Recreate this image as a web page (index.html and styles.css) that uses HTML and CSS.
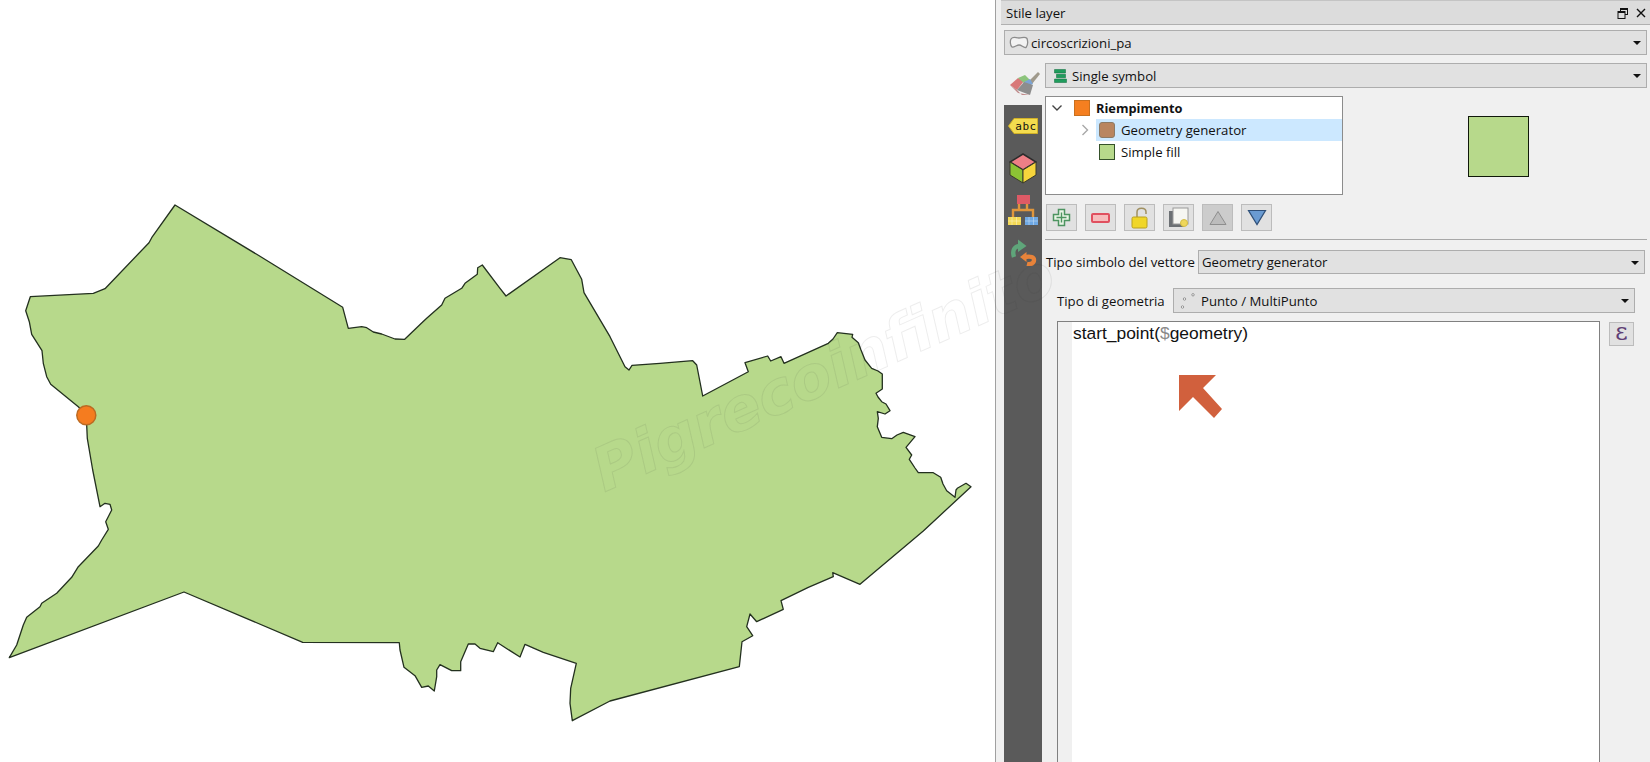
FILE: index.html
```html
<!DOCTYPE html>
<html lang="en">

<head>
  <meta charset="UTF-8">
  <meta name="viewport" content="width=device-width, initial-scale=1.0">
  <title>Stile layer</title>
  <link rel="stylesheet" href="styles.css">
</head>

<body>
  <div class="page">
    <div class="map">
      <svg width="995" height="762" viewBox="0 0 995 762">
        <polygon class="area" points="86.3,415 78.3,406.7 50.7,384.3 46.7,376.7 43.3,363.3 42,350.7 31.7,334.3 29.3,321.7 25.7,310.7 30.3,296.7 93.3,293.3 105,288.7 149,242.7 151.7,237.7 175,205 256.7,254.3 342.7,307.3 348.3,328.3 361.7,326.7 366.7,327.7 373.3,332 381.7,334 395,339 404.7,339.3 422.7,322 426.7,318.3 441.7,305 445,298.3 461.7,288.3 465,283.3 477.3,274.3 477.7,267.7 482.3,265 500,288.3 506,296 560,257.7 571.3,259.7 581.7,279.3 584,292.7 610,336.7 625,366.7 629,370 632,365.3 660,363.3 692.7,360.7 696.7,365 702.7,396 748.3,371.7 745,362.7 767.7,356 770.7,361 781,356.7 784,363.3 828.3,343.3 833,339 837.3,332.7 852.7,334.3 852,337.3 858.3,342.7 861,350 865,360 871.7,368.3 878,371 882.3,374 882.3,389 876,393.3 878,397 881.7,401.7 886,404 890,410.7 885,414 877.3,411.7 878.3,418.3 877.3,426.7 881.7,437.3 891.7,438.7 897,435 903.3,432.3 915,436.7 906,447.3 911.7,455 909.3,459.3 915,468 918.3,472.7 933.3,472.7 940.7,477.3 943,484 946.7,490.7 955,497.3 956,490 957.3,488.3 966,483.3 971,486.7 923.3,531 860,584.3 832.7,572.7 833.3,576.7 808.3,587.3 781,600.7 783.3,609.3 756.7,621.7 750,614 746.7,626.7 752.7,635.7 742,641.7 739.3,666.7 610,701 572.3,720.7 570,703.3 570.7,688.3 576.3,663.3 543.3,652.3 525,644.3 520,657 500,644.3 497.7,642.7 493.3,651.7 480,648.3 475,644 468.3,644 460.7,661.7 460.7,670.7 451.7,670.7 440,664.7 436.7,670 436.7,676.7 434.3,691 428.3,686 421.7,687.3 415,675.7 404,667.3 400,650 399.3,642.7 302.7,642.3 184,592 9.3,657.7 16.7,645 23.3,625 26.7,617.3 40,606.7 41.7,603.3 56.7,593.3 71.7,577.3 78.3,566.7 98.3,546 101.7,540 108.3,529.3 105.7,521.7 111.7,510 110,504.3 105,503.3 100,506.7 92.7,470 87.3,438.3 86.7,425.3" />
        <circle class="start-point" cx="86.3" cy="415.3" r="9.5" />
      </svg>
    </div>

    <div class="panel">
      <div class="title-bar">
        <span>Stile layer</span>
        <div class="title-buttons">
          <svg width="12" height="12" viewBox="0 0 12 12">
            <rect x="3.5" y="1.5" width="7" height="6" fill="none" stroke="#111" />
            <rect x="1" y="4.5" width="7" height="7" fill="#dcdcdc" stroke="#111" />
            <path d="M1 5.5h7M3.5 2.5h7" stroke="#111" />
          </svg>
          <svg width="10" height="10" viewBox="0 0 10 10">
            <path d="M1 1l8 8M9 1l-8 8" stroke="#111" stroke-width="1.4" />
          </svg>
        </div>
      </div>

      <div class="combo layer-combo">
        <svg width="20" height="16" viewBox="0 0 20 16">
          <path d="M2 4c2-3 5-1 8-1s6-2 8 .5c1 3 .5 7-1 9-3 .5-4-2.500-7-2.500s-5 3-7 2c-2-2-2-6-1-8z" fill="#f2f2f2" stroke="#8c8c8c" stroke-width="1.3" />
        </svg>
        <span>circoscrizioni_pa</span>
      </div>

      <div class="main">
        <div class="side">
          <div class="brush">
            <svg width="32" height="28" viewBox="0 0 32 28">
              <path d="M20 12l9-9 2 2-8 10z" fill="#a09a8c" />
              <path d="M1 16l8-7 6 3-7 9z" fill="#d87878" />
              <path d="M9 9l7-3 5 5-6 3z" fill="#8cc47c" />
              <path d="M15 13l6-3 3 5-7 3z" fill="#7ca4d4" />
              <path d="M8 21l7-8 9 3-3 10z" fill="#8d8d8d" />
              <path d="M1 16l7 5 5 5 8 0-12-2z" fill="#c08a8a" />
            </svg>
          </div>
          <div class="tab-list">
            <div class="tab-icon">
              <svg width="30" height="30" viewBox="0 0 30 30">
                <polygon points="0.5,15 6,7.5 29.5,7.5 29.5,22.5 6,22.5" fill="#f4dc4e" stroke="#d0b028" />
                <text class="tag-text" x="18" y="19">abc</text>
              </svg>
            </div>
            <div class="tab-icon">
              <svg width="28" height="31" viewBox="0 0 28 31">
                <polygon points="14,1 27,9 14,17 1,9" fill="#ee7f86" stroke="#2c2c2c" stroke-width="1.5" />
                <polygon points="1,9 14,17 14,30 1,22" fill="#8cc334" stroke="#3a3a2a" stroke-width="1" />
                <polygon points="27,9 14,17 14,30 27,22" fill="#f6d53c" stroke="#3a3a2a" stroke-width="1" />
              </svg>
            </div>
            <div class="tab-icon">
              <svg width="30" height="30" viewBox="0 0 30 30">
                <path d="M11 8v7M19 8v7M5 23v-8h20v8" fill="none" stroke="#e0963c" stroke-width="2.4" />
                <rect x="9" y="0" width="13" height="9" fill="#dd5a66" />
                <rect x="0" y="22" width="13" height="8" fill="#f4d955" />
                <rect x="17" y="22" width="13" height="8" fill="#6ea8e4" />
                <path d="M4 22v8M8.500 22v8M21 22v8M25.500 22v8M0 26h13M17 26h13" stroke="#fff" stroke-width=".6" opacity=".6" />
              </svg>
            </div>
            <div class="tab-icon">
              <svg width="28" height="28" viewBox="0 0 28 28">
                <path d="M5 19c-2-6 0-11 6-11" fill="none" stroke="#5fa57a" stroke-width="4.4" />
                <polygon points="9,1.500 17.500,8 9,14" fill="#5fa57a" />
                <path d="M16 19c6-1 9 0 9 3s-3 5-7 4" fill="none" stroke="#e8833a" stroke-width="4.4" />
                <polygon points="17.500,14 11,19 17.500,24" fill="#e8833a" />
              </svg>
            </div>
          </div>
        </div>

        <div class="content">
          <div class="combo">
            <svg width="13" height="14" viewBox="0 0 13 14">
              <path d="M.5 .5h11v3.500H.5zM2.500 5.300h9v3.400h-9zM.5 10h12v3.500H.5z" fill="#1f9c5c" stroke="#0d6a3a" stroke-width=".5" />
            </svg>
            <span>Single symbol</span>
          </div>

          <div class="symbol-row">
            <div class="tree">
              <div class="tree-row">
                <div class="twisty root">
                  <svg width="10" height="10" viewBox="0 0 10 10">
                    <path d="M.5 2.500l4.500 4.500 4.500-4.500" fill="none" stroke="#444" stroke-width="1.400" />
                  </svg>
                </div>
                <div class="tree-item">
                  <span class="swatch swatch-orange"></span>
                  <b>Riempimento</b>
                </div>
              </div>
              <div class="tree-row">
                <div class="twisty child">
                  <svg width="8" height="12" viewBox="0 0 8 12">
                    <path d="M1.500 1l5 5-5 5" fill="none" stroke="#a8a8a8" stroke-width="1.400" />
                  </svg>
                </div>
                <div class="tree-item selected">
                  <span class="swatch swatch-brown"></span>
                  <span>Geometry generator</span>
                </div>
              </div>
              <div class="tree-row">
                <div class="twisty child"></div>
                <div class="tree-item">
                  <span class="swatch swatch-green"></span>
                  <span>Simple fill</span>
                </div>
              </div>
            </div>
            <div class="preview">
              <div class="preview-box"></div>
            </div>
          </div>

          <div class="tool-row">
            <div class="tool-btn">
              <svg width="19" height="19" viewBox="0 0 19 19">
                <path d="M6.500 1.500h6v5h5v6h-5v5h-6v-5h-5v-6h5z" fill="#eaf5e6" stroke="#4d9460" stroke-width="1.500" />
                <path d="M9.500 4.500v10M4.500 9.500h10" stroke="#4d9460" stroke-width="1.400" />
              </svg>
            </div>
            <div class="tool-btn">
              <svg width="19" height="10" viewBox="0 0 19 10">
                <rect x="1" y="1" width="17" height="8" rx="1" fill="#f6bcbc" stroke="#e0505f" stroke-width="2" />
              </svg>
            </div>
            <div class="tool-btn">
              <svg width="18" height="24" viewBox="0 0 18 24">
                <path d="M6 11V6c0-5 9-5 9 0v2" fill="none" stroke="#a09060" stroke-width="1.500" />
                <rect x="1" y="11" width="15" height="11" rx="1.500" fill="#f0d628" stroke="#b8a020" />
              </svg>
            </div>
            <div class="tool-btn">
              <svg width="22" height="22" viewBox="0 0 22 22">
                <rect x="1" y="4" width="15" height="16" fill="#6c7074" />
                <rect x="5" y="1" width="15" height="16" fill="#f6f6f2" stroke="#9a9a9a" />
                <circle cx="16" cy="16" r="3.500" fill="#efd75c" stroke="#d4bd44" />
              </svg>
            </div>
            <div class="tool-btn disabled">
              <svg width="18" height="16" viewBox="0 0 18 16">
                <polygon points="9,1.500 17,14.500 1,14.500" fill="#bcbcbc" stroke="#8e8e8e" />
              </svg>
            </div>
            <div class="tool-btn">
              <svg width="20" height="17" viewBox="0 0 20 17">
                <polygon points="1.500,1.500 18.500,1.500 10,15.500" fill="#6a9bd2" stroke="#2e4f78" stroke-width="1.200" />
              </svg>
            </div>
          </div>

          <div class="divider"></div>

          <div class="form-row symbol-type">
            <span class="form-label">Tipo simbolo del vettore</span>
            <div class="combo">
              <span>Geometry generator</span>
            </div>
          </div>

          <div class="form-row geometry-type">
            <span class="form-label">Tipo di geometria</span>
            <div class="combo">
              <svg width="19" height="16" viewBox="0 0 19 16">
                <circle cx="2.500" cy="14" r="1.200" fill="#fff" stroke="#909090" />
                <circle cx="4.500" cy="6" r="1.200" fill="#fff" stroke="#909090" />
                <circle cx="13" cy="1.800" r="1.200" fill="#fff" stroke="#909090" />
              </svg>
              <span>Punto / MultiPunto</span>
            </div>
          </div>

          <div class="editor-row">
            <div class="editor">
              <div class="gutter"></div>
              <div class="code">start_point(<span class="dollar">$</span>geometry)</div>
              <svg class="note-arrow" width="46" height="46" viewBox="0 0 46 46">
                <polygon points="1,1 38,1 25,14 44,35 36,44 15,23 1,37" fill="#d1603d" />
              </svg>
            </div>
            <div class="expr-btn">&#949;</div>
          </div>
        </div>
      </div>
    </div>

    <div class="watermark">Pigrecoinfinito</div>
  </div>
</body>

</html>
```

FILE: styles.css
```css
* {
  box-sizing: border-box;
}

html,
body {
  margin: 0;
  padding: 0;
  height: 100%;
  overflow: hidden;
  background: #fff;
}

.page {
  position: relative;
  display: flex;
  width: 1650px;
  height: 762px;
  overflow: hidden;
  font-family: "Open Sans", "Noto Sans", sans-serif;
  font-size: 13.2px;
  color: #111;
}

/* map canvas */
.map {
  width: 995px;
  flex: none;
}

.map svg {
  display: block;
}

.area {
  fill: #b7d98b;
  stroke: #23301f;
  stroke-width: 1.3;
  stroke-linejoin: round;
}

.start-point {
  fill: #f57c1f;
  stroke: #bb6a22;
  stroke-width: 1.5;
}

.watermark {
  position: absolute;
  left: 606px;
  top: 436px;
  font-family: "DejaVu Sans", sans-serif;
  font-size: 60px;
  font-weight: bold;
  font-style: italic;
  line-height: 70px;
  white-space: nowrap;
  color: transparent;
  -webkit-text-stroke: 1px rgba(60, 60, 60, 0.09);
  transform: rotate(-24deg);
  transform-origin: 0 60px;
  pointer-events: none;
}

/* right panel */
.panel {
  flex: 1;
  display: flex;
  flex-direction: column;
  border-left: 1px solid #a0a0a0;
  background: #f0f0f0;
  min-width: 0;
}

.title-bar {
  display: flex;
  align-items: center;
  justify-content: space-between;
  height: 25px;
  margin-left: 5px;
  padding: 0 4px 0 5px;
  background: #dcdcdc;
  border-top: 1px solid #c4c4c4;
  border-bottom: 1px solid #b0b0b0;
}

.title-buttons {
  display: flex;
  align-items: center;
  gap: 7px;
}

.combo {
  position: relative;
  display: flex;
  align-items: center;
  gap: 2px;
  height: 25px;
  padding: 0 20px 0 4px;
  background: #e1e1e1;
  border: 1px solid #adadad;
}

.combo::after {
  content: "";
  position: absolute;
  right: 5px;
  top: 10px;
  border-left: 4px solid transparent;
  border-right: 4px solid transparent;
  border-top: 4px solid #111;
}

.layer-combo {
  margin: 5px 3px 0 8px;
  flex: none;
}

.main {
  flex: 1;
  display: flex;
  margin: 8px 3px 0 8px;
  min-height: 0;
}

.side {
  width: 38px;
  flex: none;
  display: flex;
  flex-direction: column;
}

.brush {
  height: 42px;
  flex: none;
  padding: 6px 0 0 5px;
}

.tab-list {
  flex: 1;
  background: #5a5a5a;
}

.tab-icon {
  display: flex;
  align-items: center;
  justify-content: center;
  height: 42px;
}

.tag-text {
  font-family: "DejaVu Sans Mono", monospace;
  font-size: 11px;
  letter-spacing: 0.5px;
  text-anchor: middle;
  fill: #111;
}

.content {
  flex: 1;
  margin-left: 3px;
  display: flex;
  flex-direction: column;
  min-width: 0;
}

.content > .combo {
  flex: none;
  padding-left: 8px;
  gap: 5px;
}

.symbol-row {
  display: flex;
  margin-top: 8px;
  height: 99px;
  flex: none;
}

.tree {
  width: 298px;
  flex: none;
  background: #fff;
  border: 1px solid #8c8c8c;
}

.tree-row {
  display: flex;
  height: 22px;
}

.twisty {
  display: flex;
  align-items: center;
  flex: none;
}

.twisty.root {
  width: 28px;
  padding-left: 6px;
}

.twisty.child {
  width: 50px;
  padding-left: 35px;
}

.tree-item {
  flex: 1;
  display: flex;
  align-items: center;
  gap: 6px;
}

.tree-item b {
  font-size: 12.8px;
}

.tree-row .child + .tree-item {
  padding-left: 3px;
}

.selected {
  background: #cce8ff;
}

.swatch {
  width: 16px;
  height: 16px;
  flex: none;
}

.swatch-orange {
  background: #f57f20;
  border: 1px solid #c8701f;
}

.swatch-brown {
  background: #b98560;
  border: 1px solid #8c7a66;
  border-radius: 3px;
}

.swatch-green {
  background: #b7d98b;
  border: 1px solid #35512a;
}

.preview {
  flex: 1;
  display: flex;
  align-items: center;
  justify-content: center;
  padding: 2px 0 0 7px;
}

.preview-box {
  width: 61px;
  height: 61px;
  background: #b7d98b;
  border: 1px solid #10180a;
}

.tool-row {
  display: flex;
  gap: 8px;
  margin: 9px 0 0 1px;
  flex: none;
}

.tool-btn {
  display: flex;
  align-items: center;
  justify-content: center;
  width: 31px;
  height: 27px;
  background: #e1e1e1;
  border: 1px solid #bcbcbc;
}

.tool-btn.disabled {
  background: #cccccc;
}

.divider {
  height: 1px;
  margin-top: 8px;
  background: #a8a8a8;
  flex: none;
}

.form-row {
  display: flex;
  align-items: center;
  flex: none;
}

.symbol-type {
  margin-top: 10px;
  padding: 0 2px 0 1px;
}

.symbol-type .combo {
  height: 24px;
  width: 447px;
  margin-left: auto;
  padding-left: 3px;
}

.geometry-type {
  margin-top: 14px;
  padding: 0 12px;
}

.geometry-type .combo {
  width: 462px;
  margin-left: auto;
  padding-left: 6px;
}

.editor-row {
  flex: 1;
  display: flex;
  align-items: flex-start;
  gap: 9px;
  margin: 8px 0 0 12px;
  min-height: 0;
}

.editor {
  position: relative;
  display: flex;
  width: 543px;
  height: 100%;
  background: #fff;
  border: 1px solid #808080;
  border-bottom: 0;
}

.gutter {
  width: 14px;
  flex: none;
  background: #f0f0f0;
}

.code {
  padding: 1px 0 0 1px;
  font-family: "Liberation Sans", sans-serif;
  font-size: 17.4px;
  line-height: 20px;
}

.dollar {
  color: #8a8a8a;
}

.note-arrow {
  position: absolute;
  left: 120px;
  top: 52px;
}

.expr-btn {
  width: 25px;
  height: 24px;
  margin-top: 1px;
  background: #e1e1e1;
  border: 1px solid #bcbcbc;
  font-family: "DejaVu Serif", serif;
  font-size: 24px;
  line-height: 18px;
  text-align: center;
  color: #5f3f75;
}
```
